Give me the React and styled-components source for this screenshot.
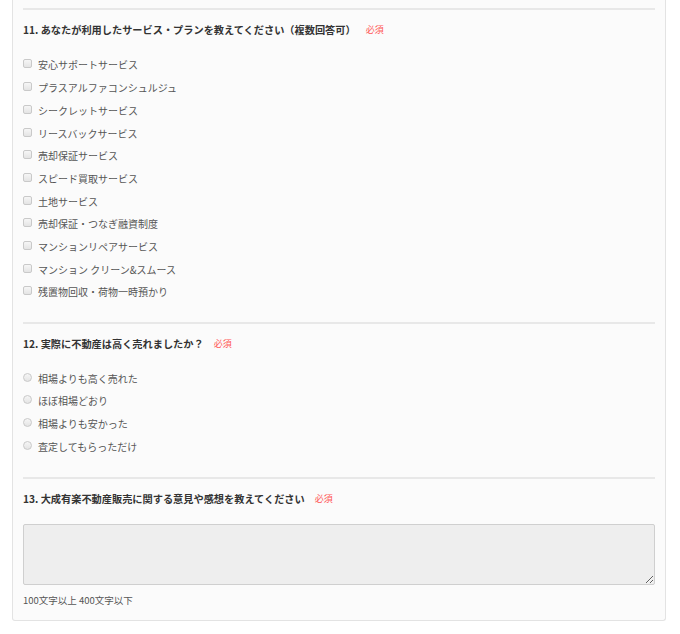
import styled, { createGlobalStyle } from "styled-components";

const GlobalStyle = createGlobalStyle`
  html, body {
    margin: 0;
    padding: 0;
    background: #fff;
  }
  body {
    font-family: "Noto Sans CJK JP", "Noto Sans", sans-serif;
  }
`;

const Panel = styled.div`
  width: 632px;
  margin-left: 12px;
  padding: 8px 10px 13px;
  background: #fbfbfb;
  border: 1px solid #e3e3e3;
  border-top: none;
  border-radius: 0 0 3px 3px;
`;

const Section = styled.section`
  border-top: 2px solid #e8e8e8;
  padding: 12px 0 ${(p) => p.$bottom ?? 19}px;
`;

const Title = styled.h3`
  margin: 0;
  font-size: 10.2px;
  line-height: 16px;
  font-weight: 700;
  color: #333;
  display: flex;
  align-items: center;
`;

const Required = styled.span`
  margin-left: 10px;
  font-size: 9px;
  font-weight: 400;
  color: #ff5656;
`;

const Options = styled.div`
  margin-top: ${(p) => p.$top ?? 15}px;
  display: flex;
  flex-direction: column;
`;

const Option = styled.label`
  height: 22.7px;
  display: flex;
  align-items: center;
  gap: 6px;
  font-size: 10px;
  color: #555;
`;

const Box = styled.input`
  appearance: none;
  margin: 0;
  width: 9px;
  height: 9px;
  border: 1px solid #c9c9c9;
  border-radius: ${(p) => (p.type === "radio" ? "50%" : "2px")};
  background: linear-gradient(#f6f6f6, #e4e4e4);
  flex-shrink: 0;
  position: relative;
  top: -1px;
`;

const TextArea = styled.textarea`
  display: block;
  box-sizing: border-box;
  width: 100%;
  height: 61px;
  margin-top: 17px;
  border: 1px solid #cfcfcf;
  border-radius: 2px;
  background: #eeeeee;
  font-family: inherit;
`;

const Note = styled.p`
  margin: 8px 0 0;
  font-size: 9.5px;
  line-height: 14px;
  color: #555;
`;

const services = [
  "安心サポートサービス",
  "プラスアルファコンシュルジュ",
  "シークレットサービス",
  "リースバックサービス",
  "売却保証サービス",
  "スピード買取サービス",
  "土地サービス",
  "売却保証・つなぎ融資制度",
  "マンションリペアサービス",
  "マンション クリーン&スムース",
  "残置物回収・荷物一時預かり",
];

const results = [
  "相場よりも高く売れた",
  "ほぼ相場どおり",
  "相場よりも安かった",
  "査定してもらっただけ",
];

const App = () => {
  return (
    <>
      <GlobalStyle />
      <Panel>
        <Section>
          <Title>
            11. あなたが利用したサービス・プランを教えてください（複数回答可）
            <Required>必須</Required>
          </Title>
          <Options $top={15.6}>
            {services.map((s) => (
              <Option key={s}>
                <Box type="checkbox" />
                {s}
              </Option>
            ))}
          </Options>
        </Section>
        <Section>
          <Title>
            12. 実際に不動産は高く売れましたか？
            <Required>必須</Required>
          </Title>
          <Options $top={14.7}>
            {results.map((r) => (
              <Option key={r}>
                <Box type="radio" name="q12" />
                {r}
              </Option>
            ))}
          </Options>
        </Section>
        <Section $bottom={0}>
          <Title>
            13. 大成有楽不動産販売に関する意見や感想を教えてください
            <Required>必須</Required>
          </Title>
          <TextArea />
          <Note>100文字以上 400文字以下</Note>
        </Section>
      </Panel>
    </>
  );
};

export default App;
